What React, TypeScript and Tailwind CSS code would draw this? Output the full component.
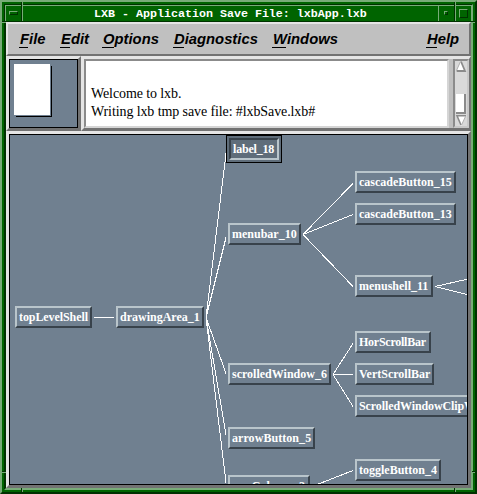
type NodeProps = { text: string; x: number; y: number; w: number; track?: string; selected?: boolean };

const nodes: NodeProps[] = [
  { text: "topLevelShell", x: 15, y: 306, w: 77, track: "tracking-[-0.08px]" },
  { text: "drawingArea_1", x: 116, y: 306, w: 88 },
  { text: "label_18", x: 229, y: 138, w: 50, selected: true, track: "tracking-[-0.2px]" },
  { text: "menubar_10", x: 228, y: 223, w: 73 },
  { text: "cascadeButton_15", x: 355, y: 171, w: 101 },
  { text: "cascadeButton_13", x: 355, y: 203, w: 101 },
  { text: "menushell_11", x: 355, y: 275, w: 78 },
  { text: "HorScrollBar", x: 355, y: 331, w: 76, track: "tracking-[-0.25px]" },
  { text: "VertScrollBar", x: 355, y: 363, w: 79 },
  { text: "ScrolledWindowClipWindow", x: 355, y: 395, w: 160, track: "tracking-[-0.1px]" },
  { text: "scrolledWindow_6", x: 228, y: 363, w: 103 },
  { text: "arrowButton_5", x: 228, y: 427, w: 87, track: "tracking-[0.06px]" },
  { text: "rowColumn_3", x: 228, y: 475, w: 82 },
  { text: "toggleButton_4", x: 355, y: 459, w: 86 },
];

const edges = [
  [94, 317, 114, 317],
  [206, 317, 226, 153],
  [206, 317, 226, 237],
  [206, 317, 226, 373],
  [206, 317, 226, 434],
  [206, 317, 226, 482],
  [303, 234, 353, 183],
  [303, 234, 353, 214],
  [303, 234, 353, 286],
  [435, 286, 475, 277],
  [435, 286, 475, 296],
  [333, 374, 353, 343],
  [333, 374, 353, 374],
  [333, 374, 353, 406],
  [312, 486, 353, 470],
];

// Canvas content starts at this window coordinate.
const OX = 10;
const OY = 135;

function TreeNode({ text, x, y, w, track, selected }: NodeProps) {
  return (
    <div
      className={
        "absolute flex h-[22px] items-center whitespace-nowrap border-2 pl-[2px] font-['Liberation_Serif',serif] text-[12px] leading-[18px] font-bold text-white " +
        (track ?? "") +
        (selected
          ? " border-t-[#38424b] border-l-[#38424b] border-r-[#b9c5cb] border-b-[#b9c5cb] bg-[#5f6d7a] shadow-[0_0_0_2px_#5f6d7a,0_0_0_3px_#000]"
          : " border-t-[#b9c5cb] border-l-[#b9c5cb] border-r-[#38424b] border-b-[#38424b]")
      }
      style={{ left: x - OX, top: y - OY, width: w }}
    >
      <span>{text}</span>
    </div>
  );
}

function Menu({ label, className }: { label: string; className: string }) {
  return (
    <button className={"flex h-[20px] items-start " + className}>
      <span className="relative">
        {label[0]}
        <span className="absolute top-[18px] -left-px h-px w-full bg-black" />
      </span>
      {label.slice(1)}
    </button>
  );
}

// Grooves that mark the resize corners on the window frame.
function Grooves() {
  const base = "absolute border-[#78ac78] ";
  const h = base + "h-[2px] w-[5px] border-b bg-[#003200]";
  const v = base + "h-[5px] w-[2px] border-r bg-[#003200]";
  return (
    <>
      <span className={h + " -left-px top-[19px]"} />
      <span className={h + " -left-px top-[469px]"} />
      <span className={h + " right-[-2px] top-[19px]"} />
      <span className={h + " right-[-2px] top-[469px]"} />
      <span className={v + " top-[-1px] left-[19px]"} />
      <span className={v + " top-[-1px] left-[452px]"} />
      <span className={v + " bottom-[-1px] left-[19px]"} />
      <span className={v + " bottom-[-1px] left-[452px]"} />
    </>
  );
}

export default function App() {
  return (
    <div className="relative flex h-[494px] w-[477px] flex-col overflow-hidden border-2 border-t-[#78ac78] border-l-[#78ac78] border-r-[#003200] border-b-[#003200] bg-[#006400] p-[2px]">
      <div className="flex h-[486px] w-[469px] flex-col border-2 border-t-[#003200] border-l-[#003200] border-r-[#78ac78] border-b-[#78ac78]">
        {/* Title bar */}
        <div className="-mt-px -ml-px flex h-[17px] w-[467px] shrink-0 border-t border-b border-l border-t-[#78ac78] border-l-[#78ac78] border-b-[#003200]">
          <div className="flex w-[16px] shrink-0 border-r border-[#003200] pt-[5px] pl-[3px]">
            <div className="h-[4px] w-[9px] border border-t-[#78ac78] border-l-[#78ac78] border-r-[#003200] border-b-[#003200]" />
          </div>
          <div className="flex grow border-l border-[#78ac78] pt-px pl-[71px] font-['Liberation_Mono',monospace] text-[11.67px] leading-[14px] font-bold whitespace-pre text-white">
            LXB - Application Save File: lxbApp.lxb
          </div>
          <div className="flex w-[17px] shrink-0 border-r border-l border-r-[#003200] border-l-[#78ac78] pt-[5px] pl-[5px]">
            <div className="h-[4px] w-[4px] border border-t-[#78ac78] border-l-[#78ac78] border-r-[#003200] border-b-[#003200]" />
          </div>
          <div className="flex w-[17px] shrink-0 border-l border-[#78ac78] pt-[3px] pl-[3px]">
            <div className="h-[9px] w-[9px] border border-t-[#78ac78] border-l-[#78ac78] border-r-[#003200] border-b-[#003200]" />
          </div>
        </div>

        {/* Menu bar */}
        <div className="flex h-[34px] shrink-0 border-2 border-t-[#e5e5e5] border-l-[#e5e5e5] border-r-[#727272] border-b-[#727272] bg-[#c0c0c0] pt-[5px] font-['Liberation_Sans',sans-serif] text-[14.8px] leading-[20px] font-bold text-black italic">
          <Menu label="File" className="ml-[12px] w-[41px]" />
          <Menu label="Edit" className="w-[42px]" />
          <Menu label="Options" className="w-[71px]" />
          <Menu label="Diagnostics" className="w-[99px]" />
          <Menu label="Windows" className="w-[154px]" />
          <Menu label="Help" className="" />
        </div>

        {/* Overview and message log */}
        <div className="flex h-[75px] shrink-0">
          <div className="w-[75px] shrink-0 border-3 border-t-[#e5e5e5] border-l-[#e5e5e5] border-r-[#727272] border-b-[#727272]">
            <div className="h-full border border-black bg-[#708090] pt-[4px] pl-[4px]">
              <div className="h-[51px] w-[36px] bg-white shadow-[1px_1px_0_#708090,2px_2px_0_#000]" />
            </div>
          </div>
          <div className="flex grow border-3 border-r-2 border-t-[#e5e5e5] border-l-[#e5e5e5] border-r-[#727272] border-b-[#727272] bg-[#c0c0c0]">
            <div className="w-[365px] shrink-0 border-2 border-t-[#8b8b8b] border-l-[#8b8b8b] border-r-[#d5d5d5] border-b-[#d5d5d5] bg-white pt-[24px] pl-[5px] font-['Liberation_Serif',serif] text-[14px] leading-[18px] tracking-[-0.1px] whitespace-nowrap text-black">
              <p>Welcome to lxb.</p>
              <p>Writing lxb tmp save file: #lxbSave.lxb#</p>
            </div>
            <div className="ml-[4px] w-[16px] shrink-0 border-2 border-t-[#8b8b8b] border-l-[#8b8b8b] border-r-[#c8c8c8] border-b-[#c8c8c8] bg-[#d9d9d9]">
              <svg width="12" height="65">
                <path d="M6 0 L1 11 H11 Z" fill="#fff" />
                <path d="M6 0.5 L10 10 H1.5" stroke="#8b8b8b" strokeWidth="1.8" fill="none" />
                <path d="M5.5 0.5 L1.5 9.5" stroke="#b0b0b0" fill="none" />
                <rect x="1" y="33" width="10" height="20" fill="#8b8b8b" />
                <rect x="1" y="33" width="8" height="18" fill="#fff" />
                <path d="M1 54 H11 L6 65 Z" fill="#fff" />
                <path d="M11 54.8 H2 L6 64" stroke="#8b8b8b" strokeWidth="1.6" fill="none" />
                <path d="M10.5 55.5 L6.5 64" stroke="#b0b0b0" fill="none" />
              </svg>
            </div>
          </div>
        </div>

        {/* Widget tree */}
        <div className="h-[357px] shrink-0 border-3 border-t-[#e5e5e5] border-l-[#e5e5e5] border-r-[#727272] border-b-[#727272]">
          <div className="relative h-full overflow-hidden border border-black bg-[#708090]">
            <svg className="absolute inset-0" width="457" height="349" viewBox="10 135 457 349" shapeRendering="crispEdges">
              {edges.map(([a, b, c, d], i) => (
                <line key={i} x1={a} y1={b + 0.5} x2={c} y2={d + 0.5} stroke="#fff" />
              ))}
            </svg>
            {nodes.map((n) => (
              <TreeNode key={n.text} {...n} />
            ))}
          </div>
        </div>
      </div>
      <Grooves />
    </div>
  );
}
